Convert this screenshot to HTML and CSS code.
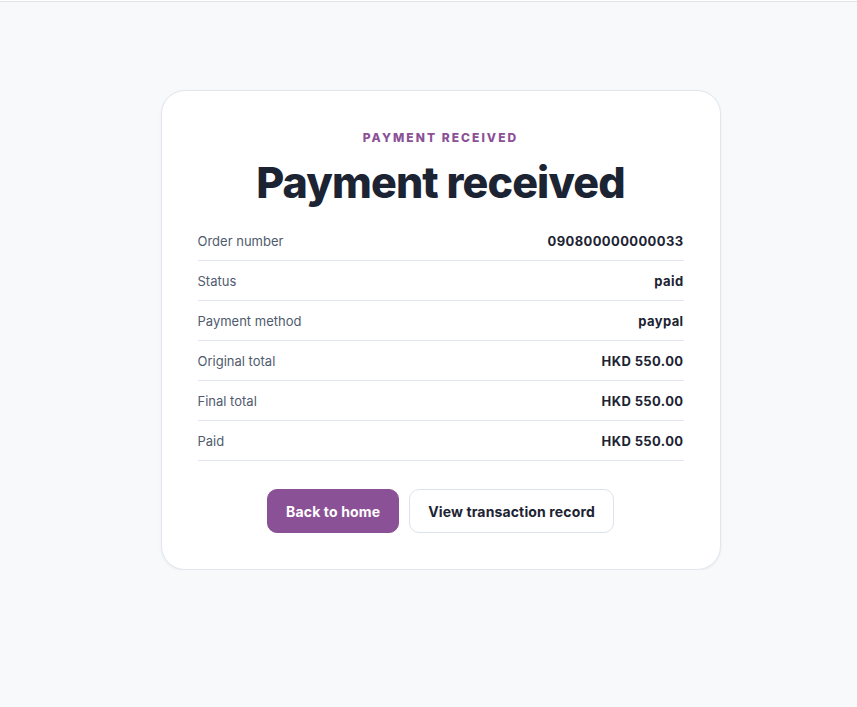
FILE: index.html
```html
<!doctype html>
<html>
  <head>
    <meta name="viewport" content="width=device-width">
    <title>Payment received</title>
    <link rel="stylesheet" href="styles.css">
  </head>
  <body>
    <div class="topbar"></div>
    <main class="page">
      <div class="card">
        <p class="eyebrow">Payment received</p>
        <h1 class="title">Payment received</h1>

        <div class="rows">
          <div class="row"><span class="label">Order number</span><span class="value">090800000000033</span></div>
          <div class="row"><span class="label">Status</span><span class="value">paid</span></div>
          <div class="row"><span class="label">Payment method</span><span class="value">paypal</span></div>
          <div class="row"><span class="label">Original total</span><span class="value">HKD 550.00</span></div>
          <div class="row"><span class="label">Final total</span><span class="value">HKD 550.00</span></div>
          <div class="row"><span class="label">Paid</span><span class="value">HKD 550.00</span></div>
        </div>

        <div class="actions">
          <button class="btn primary">Back to home</button>
          <button class="btn outline">View transaction record</button>
        </div>
      </div>
    </main>
  </body>
</html>
```

FILE: styles.css
```css
body {
  margin: 0;
  background: #f8f9fb;
  font-family: Inter, "Noto Sans", sans-serif;
  color: #1e2433;
}

.topbar {
  height: 1px;
  background: #fff;
  border-bottom: 1px solid #e1e3e8;
}

.page {
  display: flex;
  justify-content: center;
  padding: 88px 0 0 24px;
}

.card {
  width: 560px;
  box-sizing: border-box;
  padding: 36px;
  background: #fff;
  border: 1px solid #e2e6ee;
  border-radius: 24px;
  box-shadow: 0 1px 3px rgba(15, 23, 42, 0.06);
  text-align: center;
}

.eyebrow {
  margin: 0;
  padding-top: 1px;
  font-size: 12px;
  line-height: 20px;
  font-weight: 800;
  letter-spacing: 0.17em;
  text-transform: uppercase;
  color: #8b5196;
}

.title {
  margin: 9px 0 13px;
  font-size: 43px;
  line-height: 51px;
  font-weight: 800;
  letter-spacing: -0.02em;
  color: #1c2333;
}

.rows {
  text-align: left;
}

.row {
  display: flex;
  justify-content: space-between;
  align-items: center;
  height: 39px;
  border-bottom: 1px solid #e2e6ee;
  font-size: 13px;
}

.label {
  color: #4f5b6e;
}

.value {
  font-weight: 700;
  letter-spacing: 0.03em;
  color: #1c2333;
}

.actions {
  display: flex;
  justify-content: center;
  gap: 10px;
  margin-top: 28px;
}

.btn {
  height: 44px;
  padding: 0 18px;
  border-radius: 10px;
  font-family: inherit;
  font-size: 14px;
  font-weight: 700;
  letter-spacing: 0.01em;
  cursor: pointer;
}

.primary {
  background: #8b5196;
  border: 1px solid #8b5196;
  color: #fff;
}

.outline {
  background: #fff;
  border: 1px solid #dde2ec;
  color: #1c2333;
}
```
